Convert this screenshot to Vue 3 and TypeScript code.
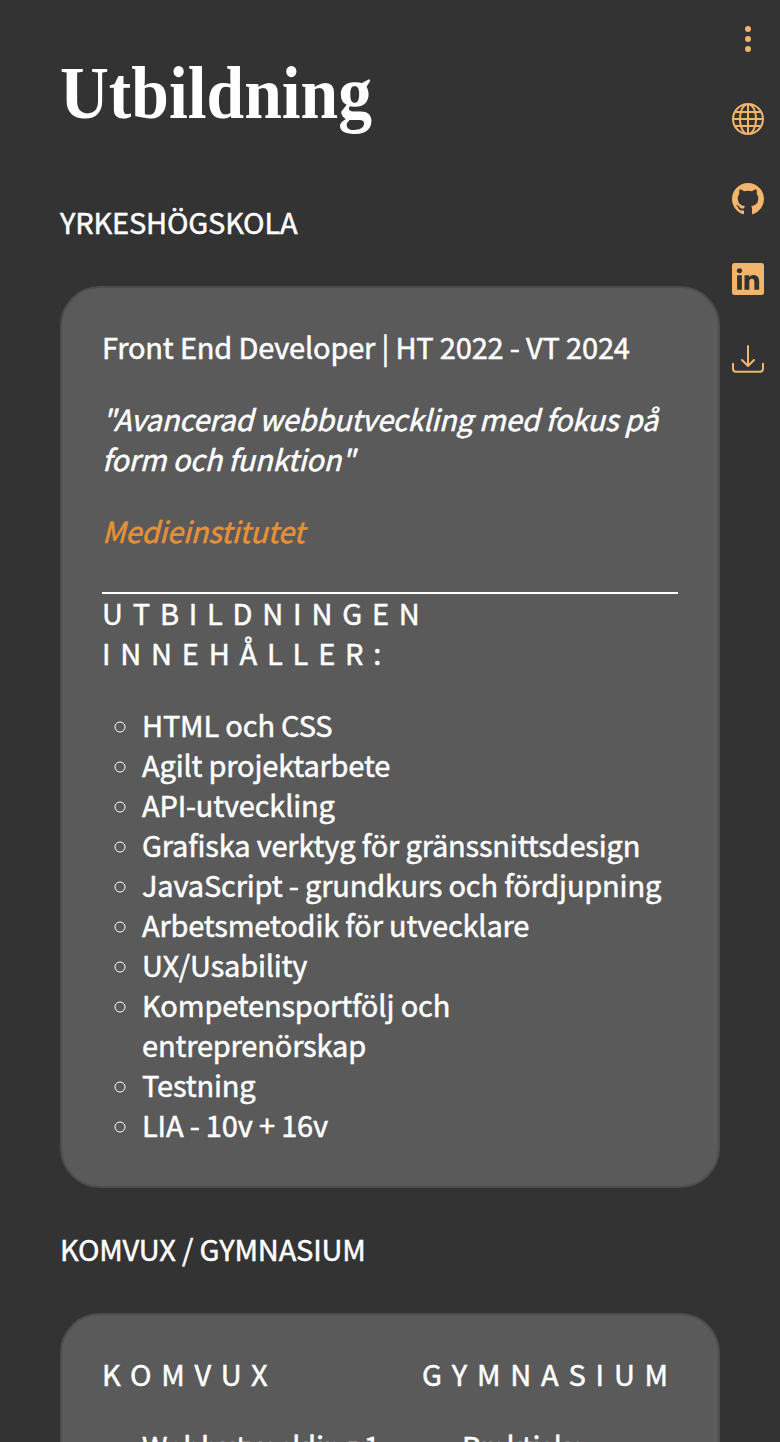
<script setup lang="ts">
interface Icon {
  name: string
  paths: string[]
}

const icons: Icon[] = [
  {
    name: 'Meny',
    paths: ['M9.5 13a1.5 1.5 0 1 1-3 0 1.5 1.5 0 0 1 3 0zm0-5a1.5 1.5 0 1 1-3 0 1.5 1.5 0 0 1 3 0zm0-5a1.5 1.5 0 1 1-3 0 1.5 1.5 0 0 1 3 0z'],
  },
  {
    name: 'Webbplats',
    paths: ['M0 8a8 8 0 1 1 16 0A8 8 0 0 1 0 8zm7.5-6.923c-.67.204-1.335.82-1.887 1.855A7.97 7.97 0 0 0 5.145 4H7.5V1.077zM4.09 4a9.267 9.267 0 0 1 .64-1.539 6.7 6.7 0 0 1 .597-.933A7.025 7.025 0 0 0 2.255 4H4.09zm-.582 3.5c.03-.877.138-1.718.312-2.5H1.674a6.958 6.958 0 0 0-.656 2.5h2.49zM4.847 5a12.5 12.5 0 0 0-.338 2.5H7.5V5H4.847zM8.5 5v2.5h2.99a12.495 12.495 0 0 0-.337-2.5H8.5zM4.51 8.5a12.5 12.5 0 0 0 .337 2.5H7.5V8.5H4.51zm3.99 0V11h2.653c.187-.765.306-1.608.338-2.5H8.5zM5.145 12c.138.386.295.744.468 1.068.552 1.035 1.218 1.65 1.887 1.855V12H5.145zm.182 2.472a6.696 6.696 0 0 1-.597-.933A9.268 9.268 0 0 1 4.09 12H2.255a7.024 7.024 0 0 0 3.072 2.472zM3.82 11a13.652 13.652 0 0 1-.312-2.5h-2.49c.062.89.291 1.733.656 2.5H3.82zm6.853 3.472A7.024 7.024 0 0 0 13.745 12H11.91a9.27 9.27 0 0 1-.64 1.539 6.688 6.688 0 0 1-.597.933zM8.5 12v2.923c.67-.204 1.335-.82 1.887-1.855.173-.324.33-.682.468-1.068H8.5zm3.68-1h2.146c.365-.767.594-1.61.656-2.5h-2.49a13.65 13.65 0 0 1-.312 2.5zm2.802-3.5a6.959 6.959 0 0 0-.656-2.5H12.18c.174.782.282 1.623.312 2.5h2.49zM11.27 2.461c.247.464.462.98.64 1.539h1.835a7.024 7.024 0 0 0-3.072-2.472c.218.284.418.598.597.933zM10.855 4a7.966 7.966 0 0 0-.468-1.068C9.835 1.897 9.17 1.282 8.5 1.077V4h2.355z'],
  },
  {
    name: 'GitHub',
    paths: ['M8 0C3.58 0 0 3.58 0 8c0 3.54 2.29 6.53 5.47 7.59.4.07.55-.17.55-.38 0-.19-.01-.82-.01-1.49-2.01.37-2.53-.49-2.69-.94-.09-.23-.48-.94-.82-1.13-.28-.15-.68-.52-.01-.53.63-.01 1.08.58 1.23.82.72 1.21 1.87.87 2.33.66.07-.52.28-.87.51-1.07-1.78-.2-3.64-.89-3.64-3.95 0-.87.31-1.59.82-2.15-.08-.2-.36-1.02.08-2.12 0 0 .67-.21 2.2.82.64-.18 1.32-.27 2-.27.68 0 1.36.09 2 .27 1.53-1.04 2.2-.82 2.2-.82.44 1.1.16 1.92.08 2.12.51.56.82 1.27.82 2.15 0 3.07-1.87 3.75-3.65 3.95.29.25.54.73.54 1.48 0 1.07-.01 1.93-.01 2.2 0 .21.15.46.55.38A8.012 8.012 0 0 0 16 8c0-4.42-3.58-8-8-8z'],
  },
  {
    name: 'LinkedIn',
    paths: ['M0 1.146C0 .513.526 0 1.175 0h13.65C15.474 0 16 .513 16 1.146v13.708c0 .633-.526 1.146-1.175 1.146H1.175C.526 16 0 15.487 0 14.854V1.146zm4.943 12.248V6.169H2.542v7.225h2.401zm-1.2-8.212c.837 0 1.358-.554 1.358-1.248-.015-.709-.52-1.248-1.342-1.248-.822 0-1.359.54-1.359 1.248 0 .694.521 1.248 1.327 1.248h.016zm4.908 8.212V9.359c0-.216.016-.432.08-.586.173-.431.568-.878 1.232-.878.869 0 1.216.662 1.216 1.634v3.865h2.401V9.25c0-2.22-1.184-3.252-2.764-3.252-1.274 0-1.845.7-2.165 1.193v.025h-.016a5.54 5.54 0 0 1 .016-.025V6.169h-2.4c.03.678 0 7.225 0 7.225h2.4z'],
  },
  {
    name: 'Ladda ner',
    paths: [
      'M.5 9.9a.5.5 0 0 1 .5.5v2.5a1 1 0 0 0 1 1h12a1 1 0 0 0 1-1v-2.5a.5.5 0 0 1 1 0v2.5a2 2 0 0 1-2 2H2a2 2 0 0 1-2-2v-2.5a.5.5 0 0 1 .5-.5z',
      'M7.646 11.854a.5.5 0 0 0 .708 0l3-3a.5.5 0 0 0-.708-.708L8.5 10.293V1.5a.5.5 0 0 0-1 0v8.793L5.354 8.146a.5.5 0 1 0-.708.708l3 3z',
    ],
  },
]

const courses: string[] = [
  'HTML och CSS',
  'Agilt projektarbete',
  'API-utveckling',
  'Grafiska verktyg för gränssnittsdesign',
  'JavaScript - grundkurs och fördjupning',
  'Arbetsmetodik för utvecklare',
  'UX/Usability',
  'Kompetensportfölj och entreprenörskap',
  'Testning',
  'LIA - 10v + 16v',
]
</script>

<template>
  <div class="page">
    <main class="content">
      <h1><span>Utbildning</span></h1>

      <h2>YRKESHÖGSKOLA</h2>
      <section class="card">
        <p>Front End Developer | HT 2022 - VT 2024</p>
        <p class="quote">"Avancerad webbutveckling med fokus på form och funktion"</p>
        <p class="quote"><a>Medieinstitutet</a></p>
        <hr />
        <h3>UTBILDNINGEN INNEHÅLLER:</h3>
        <ul>
          <li v-for="course in courses" :key="course">{{ course }}</li>
        </ul>
      </section>

      <h2 class="second">KOMVUX / GYMNASIUM</h2>
      <section class="card columns">
        <div>
          <h3>KOMVUX</h3>
          <ul><li>Webbutveckling 1</li></ul>
        </div>
        <div>
          <h3>GYMNASIUM</h3>
          <ul><li>Praktiska</li></ul>
        </div>
      </section>
    </main>

    <nav class="rail">
      <svg v-for="icon in icons" :key="icon.name" viewBox="0 0 16 16" :aria-label="icon.name">
        <path v-for="d in icon.paths" :key="d" :d="d" />
      </svg>
    </nav>
  </div>
</template>

<style>
body {
  margin: 0;
  background: #333;
}
</style>

<style scoped>
.page {
  position: relative;
  box-sizing: border-box;
  height: 1442px;
  overflow: hidden;
  background: #333;
  color: #fff;
  font: 400 29px/40px "Noto Sans CJK JP", "Noto Sans CJK SC", sans-serif;
  letter-spacing: -0.18px;
  -webkit-text-stroke: 0.5px currentColor;
}
.content {
  padding: 54px 60px 0;
}
h1 {
  margin: 0;
  height: 82px;
  font: 700 73.5px/80px "Liberation Serif", serif;
  letter-spacing: 0;
  -webkit-text-stroke: 0;
  white-space: nowrap;
}
h1 span {
  display: inline-block;
  transform: scaleX(0.92);
  transform-origin: left;
}
h2 {
  margin: 65px 0 45px;
  font-size: inherit;
  line-height: 40px;
  font-weight: inherit;
}
h2.second {
  margin: 40px 0 45px;
}
.card {
  box-sizing: border-box;
  height: 902px;
  padding: 38px 40px 0;
  border: 2px solid #4d4d4d;
  border-radius: 40px;
  background: #5a5a5a;
}
p {
  margin: 0 0 32px;
}
.quote {
  font-style: italic;
}
a {
  color: #e69138;
}
hr {
  height: 2px;
  margin: 42px 0 -2px;
  border: 0;
  background: #fff;
}
h3 {
  margin: 0 0 32px;
  font-size: inherit;
  font-weight: inherit;
  letter-spacing: 9.8px;
}
ul {
  margin: 0;
  padding: 0 0 0 40px;
  list-style: circle;
}
li::marker {
  font-size: 27px;
}
.columns {
  display: grid;
  grid-template-columns: 256px 256px;
  column-gap: 64px;
  white-space: nowrap;
}
.columns ul {
  list-style: none;
}
.rail {
  position: absolute;
  top: 23px;
  right: 16px;
  display: flex;
  flex-direction: column;
  gap: 48px;
}
.rail svg {
  display: block;
  width: 32px;
  height: 32px;
  fill: #f2b56b;
}
</style>
